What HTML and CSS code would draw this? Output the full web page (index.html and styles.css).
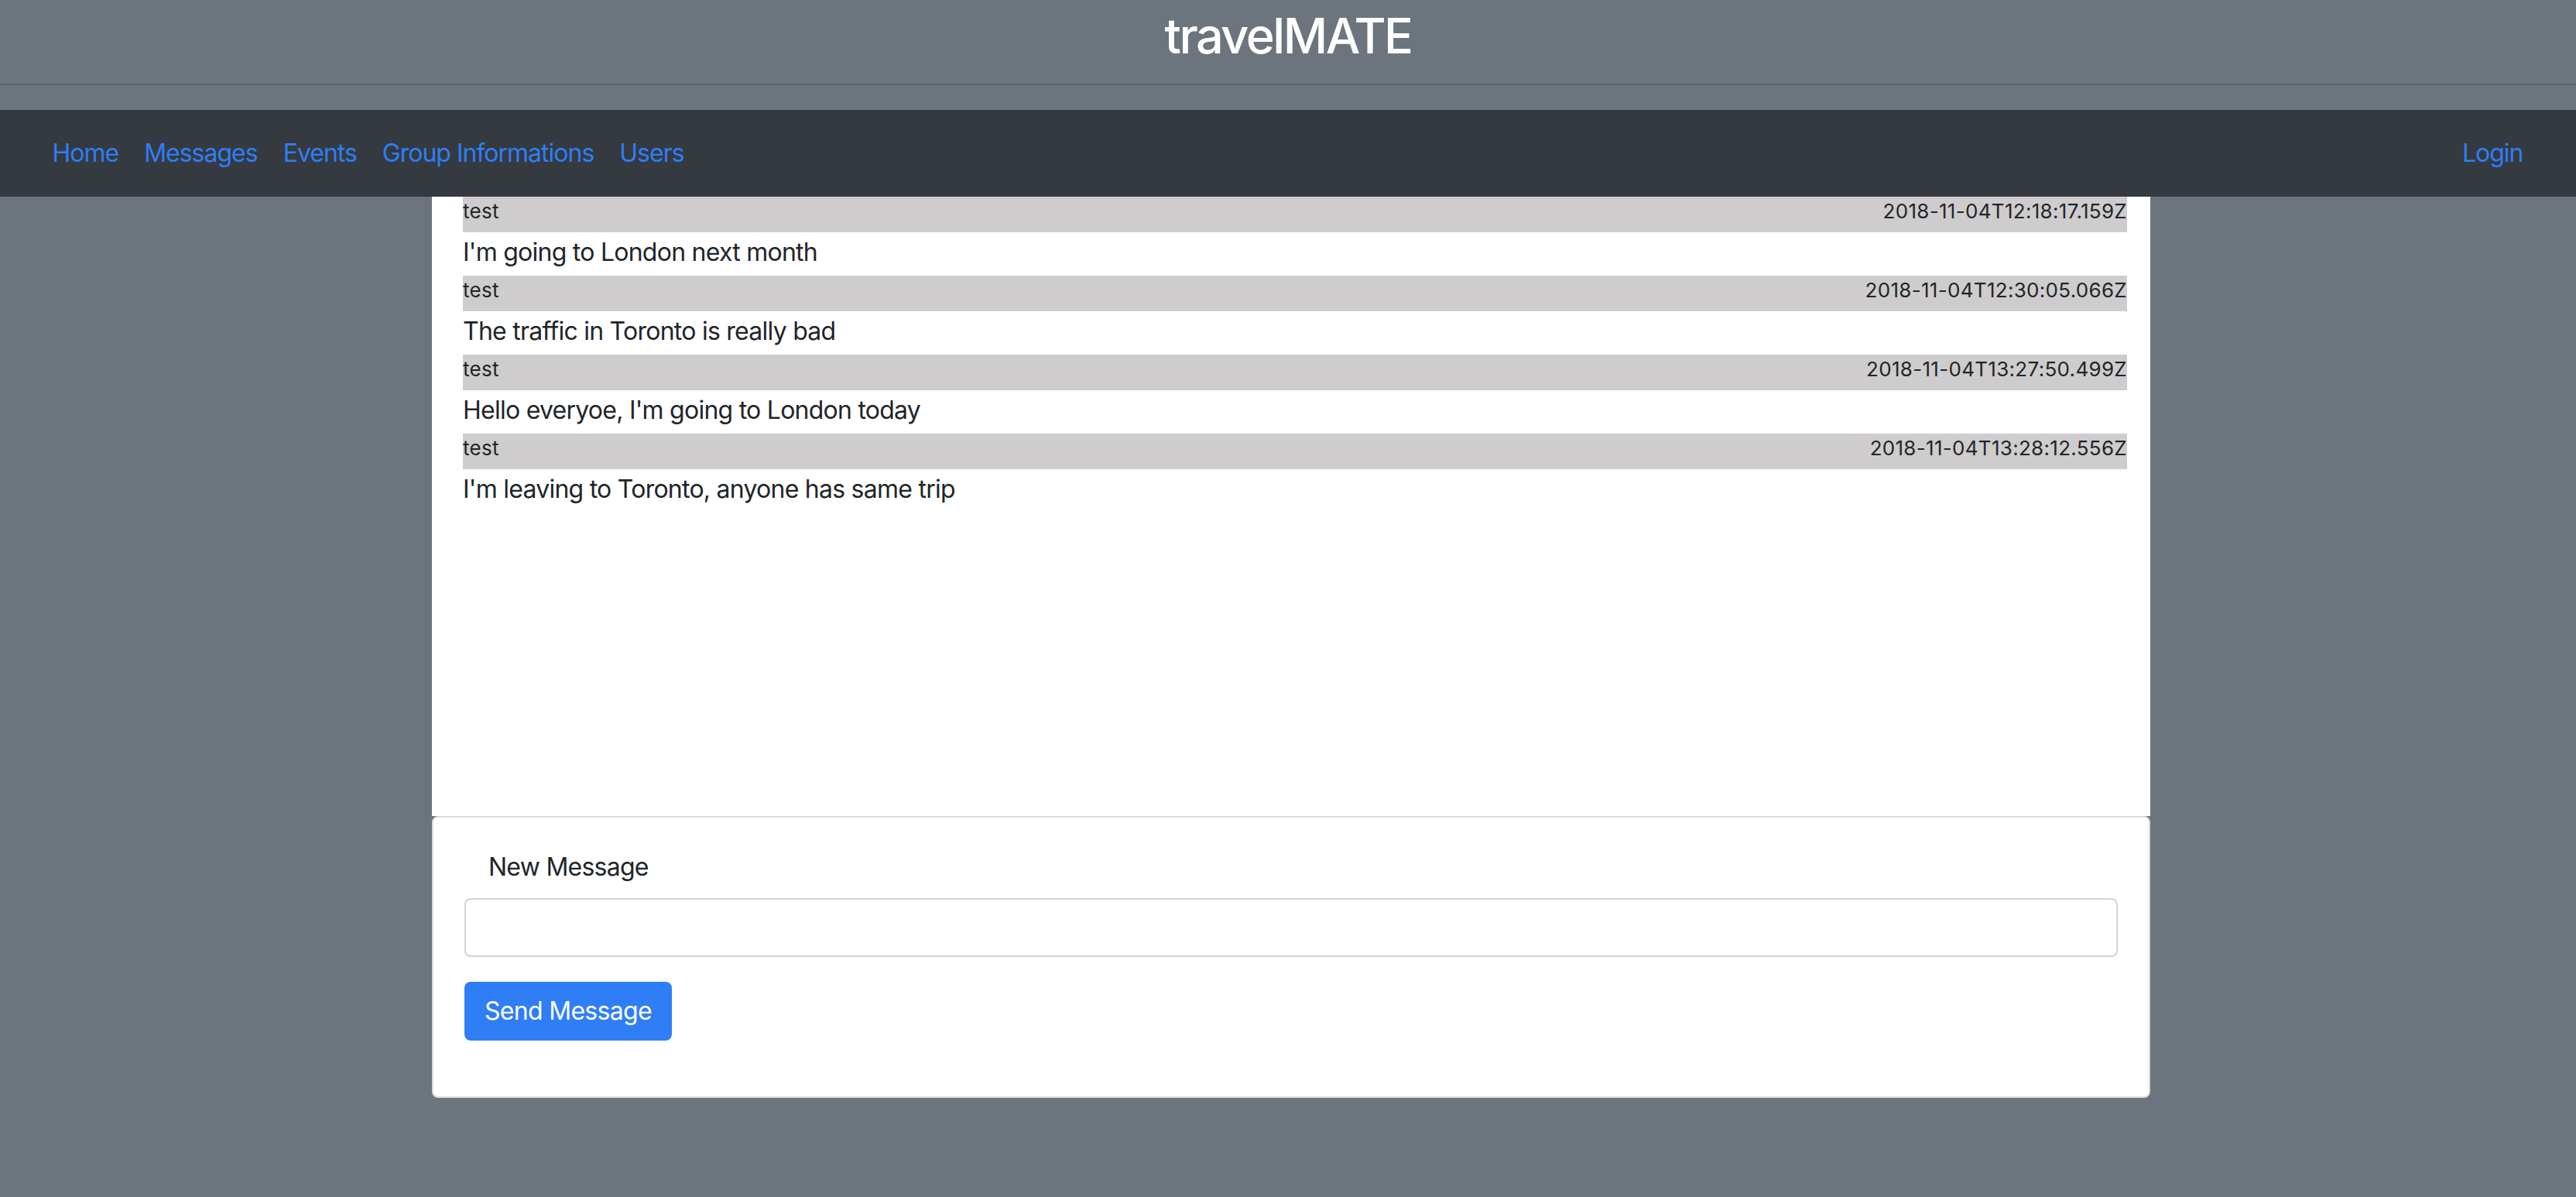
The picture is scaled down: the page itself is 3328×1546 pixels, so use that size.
FILE: index.html
```html
<!DOCTYPE html>
<html lang="en">
<head>
<meta charset="utf-8">
<title>travelMATE</title>
<link rel="stylesheet" href="styles.css">
</head>
<body>
<header class="site-header">
  <h1 class="site-title">travelMATE</h1>
</header>
<nav class="navbar">
  <ul class="nav-list">
    <li><a class="nav-link" href="#">Home</a></li>
    <li><a class="nav-link" href="#">Messages</a></li>
    <li><a class="nav-link" href="#">Events</a></li>
    <li><a class="nav-link" href="#">Group Informations</a></li>
    <li><a class="nav-link" href="#">Users</a></li>
  </ul>
  <ul class="nav-list">
    <li><a class="nav-link" href="#">Login</a></li>
  </ul>
</nav>
<main class="main">
  <div class="container">
    <section class="messages">
      <div class="msg">
        <div class="msg-head"><span>test</span><span>2018-11-04T12:18:17.159Z</span></div>
        <div class="msg-body">I'm going to London next month</div>
      </div>
      <div class="msg">
        <div class="msg-head"><span>test</span><span>2018-11-04T12:30:05.066Z</span></div>
        <div class="msg-body">The traffic in Toronto is really bad</div>
      </div>
      <div class="msg">
        <div class="msg-head"><span>test</span><span>2018-11-04T13:27:50.499Z</span></div>
        <div class="msg-body">Hello everyoe, I'm going to London today</div>
      </div>
      <div class="msg">
        <div class="msg-head"><span>test</span><span>2018-11-04T13:28:12.556Z</span></div>
        <div class="msg-body">I'm leaving to Toronto, anyone has same trip</div>
      </div>
    </section>
    <form class="card">
      <div class="form-group">
        <label class="form-label" for="newmsg">New Message</label>
        <input class="form-control" id="newmsg" type="text">
      </div>
      <div class="form-group">
        <button class="btn" type="button">Send Message</button>
      </div>
    </form>
  </div>
</main>
</body>
</html>
```
FILE: styles.css
```css
* {
  box-sizing: border-box;
}

html, body {
  margin: 0;
  padding: 0;
}

body {
  background: #6c757d;
  font-family: Inter, "Noto Sans", "Liberation Sans", sans-serif;
  color: #212529;
  min-height: 1546px;
}

.site-header {
  height: 110px;
  padding-top: 8px;
  border-bottom: 2px solid #5c6269;
  margin-bottom: 32px;
  text-align: center;
}

.site-title {
  margin: 0;
  font-size: 63px;
  line-height: 76.8px;
  font-weight: 500;
  color: #ffffff;
  letter-spacing: -2.5px;
}

.navbar {
  background: #343a40;
  height: 112px;
  padding: 0 52px 0 51px;
  display: flex;
  align-items: center;
  justify-content: space-between;
}

.nav-list {
  list-style: none;
  margin: 0;
  padding: 0;
  display: flex;
}

.nav-link {
  display: block;
  padding: 16px 16.5px;
  font-size: 32px;
  line-height: 48px;
  color: #2f7ef5;
  text-decoration: none;
  letter-spacing: -1px;
}

.main {
  display: flex;
  justify-content: center;
  padding-left: 8px;
}

.container {
  width: 2220px;
}

.messages {
  background: #ffffff;
  height: 800px;
  padding: 0 30px 0 40px;
}

.msg-head {
  height: 46px;
  padding-top: 1px;
  background: #cecccd;
  display: flex;
  justify-content: space-between;
  font-size: 26px;
  line-height: 36px;
  letter-spacing: 0.3px;
}

.msg-body {
  font-size: 32px;
  line-height: 48px;
  padding-top: 2px;
  margin-bottom: 6px;
  letter-spacing: -0.75px;
}

.card {
  display: block;
  margin: 0;
  background: #ffffff;
  border: 2px solid #dcdcdd;
  border-radius: 8px;
  padding: 40px;
}

.form-group {
  margin-bottom: 32px;
}

.form-label {
  display: block;
  padding-left: 31px;
  margin-bottom: 16px;
  font-size: 32px;
  line-height: 48px;
  letter-spacing: -0.75px;
}

.form-control {
  display: block;
  width: 100%;
  height: 76px;
  border: 2px solid #ced4da;
  border-radius: 8px;
  background: #ffffff;
  font-family: inherit;
  font-size: 32px;
  padding: 0 24px;
}

.btn {
  display: block;
  height: 76px;
  padding: 0 24px;
  border: 2px solid #2f7ef5;
  border-radius: 8px;
  background: #2f7ef5;
  color: #ffffff;
  font-family: inherit;
  font-size: 32px;
  line-height: 48px;
  letter-spacing: -0.7px;
}
```
